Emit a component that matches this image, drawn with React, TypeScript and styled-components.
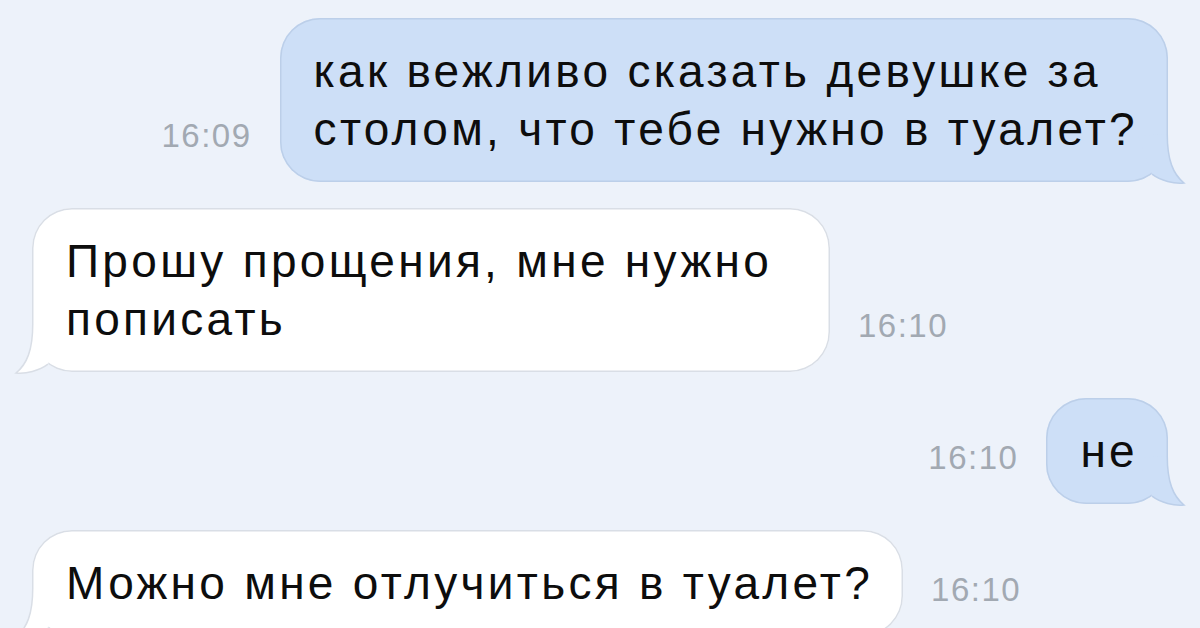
import React from 'react';
import styled, { createGlobalStyle } from 'styled-components';

type Side = 'in' | 'out';

interface Message {
  id: number;
  side: Side;
  time: string;
  lines: string[];
  minWidth?: number;
}

const messages: Message[] = [
  { id: 1, side: 'out', time: '16:09', lines: ['как вежливо сказать девушке за', 'столом, что тебе нужно в туалет?'] },
  { id: 2, side: 'in', time: '16:10', lines: ['Прошу прощения, мне нужно', 'пописать'], minWidth: 798 },
  { id: 3, side: 'out', time: '16:10', lines: ['не'] },
  { id: 4, side: 'in', time: '16:10', lines: ['Можно мне отлучиться в туалет?'] },
];

const palette = {
  out: { fill: '#cddff7', stroke: '#bccfe9' },
  in: { fill: '#ffffff', stroke: '#d9dee6' },
};

const GlobalStyle = createGlobalStyle`
  html, body {
    margin: 0;
    padding: 0;
    background: #edf2fa;
  }
  body {
    font-family: "Liberation Sans", Arial, sans-serif;
    -webkit-font-smoothing: antialiased;
  }
`;

const Chat = styled.div`
  width: 1200px;
  height: 628px;
  box-sizing: border-box;
  padding: 18px 32px 0 32px;
  display: flex;
  flex-direction: column;
  gap: 26px;
  overflow: hidden;
  background: #edf2fa;
`;

const Row = styled.div<{ $side: Side }>`
  display: flex;
  align-items: flex-end;
  justify-content: ${(p) => (p.$side === 'out' ? 'flex-end' : 'flex-start')};
  gap: 28px;
`;

const Time = styled.span`
  font-size: 33px;
  line-height: 34px;
  color: #a2a9b2;
  letter-spacing: 1.5px;
  margin-bottom: 29px;
`;

const Bubble = styled.div<{ $side: Side; $minWidth?: number }>`
  position: relative;
  box-sizing: border-box;
  min-width: ${(p) => (p.$minWidth ? `${p.$minWidth}px` : 'auto')};
  padding: 24px 30px 24px 34px;
  border-radius: 40px;
  background: ${(p) => palette[p.$side].fill};
  box-shadow: inset 0 0 0 1.5px ${(p) => palette[p.$side].stroke};
  color: #0d0d0d;
  font-size: 46px;
  line-height: 58px;
  letter-spacing: 3.3px;
  white-space: nowrap;
`;

const TailSvg = styled.svg<{ $side: Side }>`
  position: absolute;
  bottom: -4px;
  width: 60px;
  height: 54px;
  ${(p) => (p.$side === 'in' ? 'left: -20px;' : 'right: -20px; transform: scaleX(-1);')}
`;

const Tail: React.FC<{ side: Side }> = ({ side }) => {
  const c = palette[side];
  const edge = 'M 20.75 2 C 20.75 28, 15 42, 4 51 C 14 52, 27 49, 36 42.2';
  return (
    <TailSvg $side={side} viewBox="0 0 60 54">
      <path d={`${edge} L 50 4 L 20.75 2 Z`} fill={c.fill} />
      <path d={edge} fill="none" stroke={c.stroke} strokeWidth={1.5} />
    </TailSvg>
  );
};

const MessageRow: React.FC<{ msg: Message }> = ({ msg }) => {
  const bubble = (
    <Bubble $side={msg.side} $minWidth={msg.minWidth}>
      {msg.lines.map((line, i) => (
        <React.Fragment key={i}>
          {i > 0 && <br />}
          {line}
        </React.Fragment>
      ))}
      <Tail side={msg.side} />
    </Bubble>
  );

  return (
    <Row $side={msg.side}>
      {msg.side === 'out' && <Time>{msg.time}</Time>}
      {bubble}
      {msg.side === 'in' && <Time>{msg.time}</Time>}
    </Row>
  );
};

export default function App() {
  return (
    <>
      <GlobalStyle />
      <Chat>
        {messages.map((m) => (
          <MessageRow key={m.id} msg={m} />
        ))}
      </Chat>
    </>
  );
}
